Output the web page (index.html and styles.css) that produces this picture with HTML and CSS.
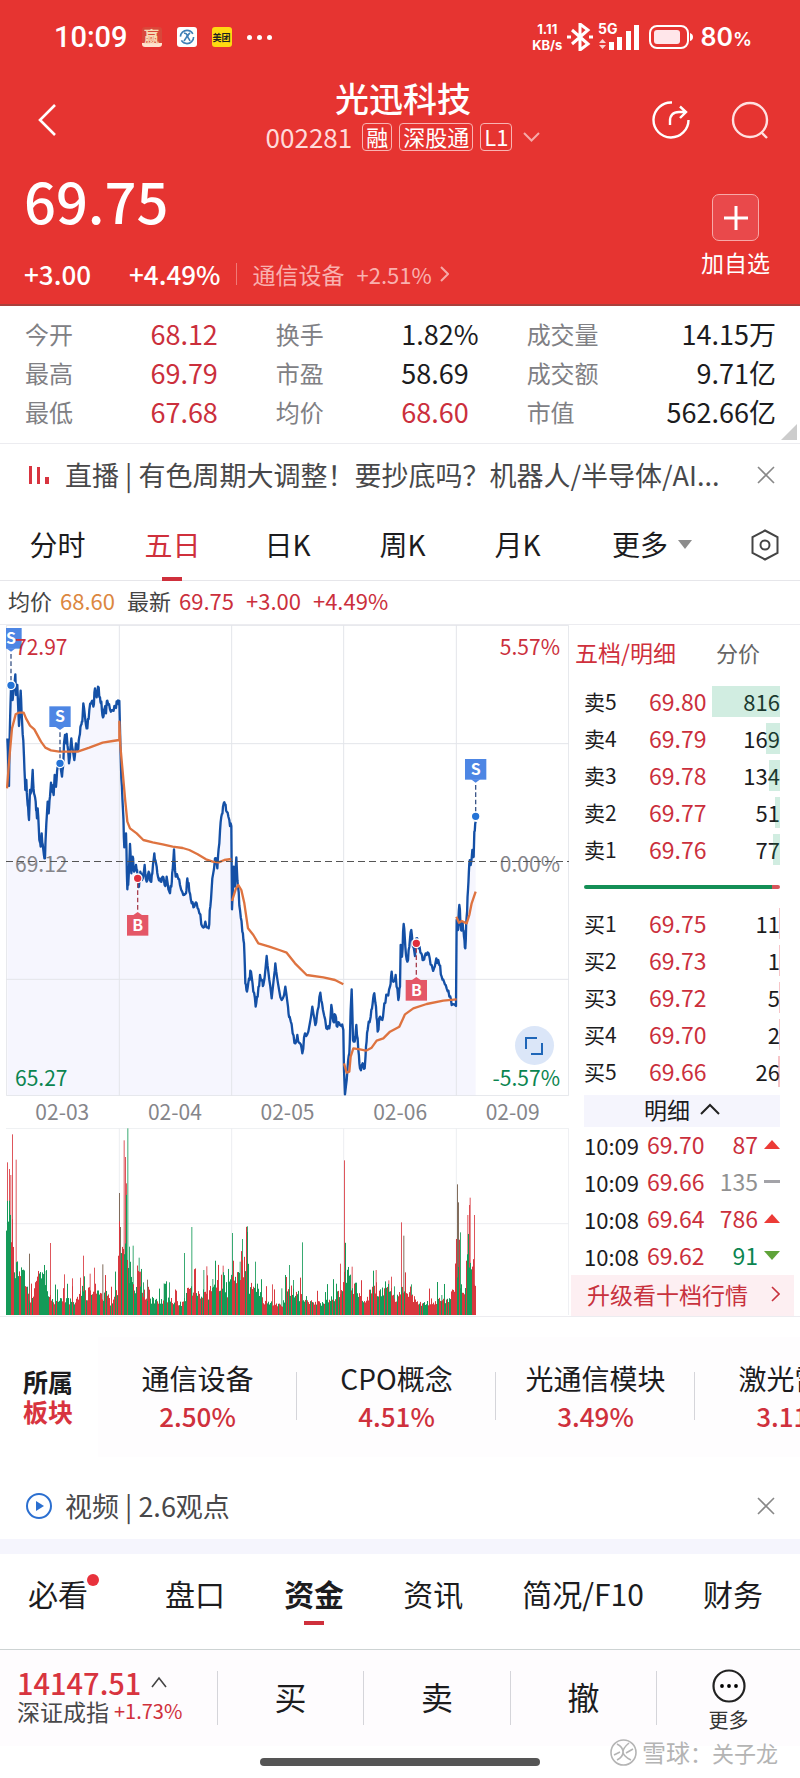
FILE: index.html
```html
<!DOCTYPE html>
<html lang="zh-CN">
<head>
    <meta charset="UTF-8">
    <meta name="viewport" content="width=device-width, initial-scale=1.0">
    <title>光迅科技 002281</title>
    <link rel="stylesheet" href="styles.css">
</head>
<body>
    <header class="header">
        <div class="status">
            <span class="clock">10:09</span>
            <span class="app app-red">赢</span>
            <span class="app app-white">
                <svg width="16" height="16" viewBox="0 0 16 16" fill="none" stroke="#3f7fb5" stroke-width="1.6"><circle cx="8" cy="8" r="6.6" stroke-dasharray="17 4"/><path d="M5 4q5 1 2 5l-2 3M11 4q-4 3-1 6l1 2"/></svg>
            </span>
            <span class="app app-yellow">美团</span>
            <span class="dots"><i></i><i></i><i></i></span>
            <span class="speed">1.11<br>KB/s</span>
            <svg class="bt" width="26" height="28" viewBox="0 0 26 28" fill="none" stroke="#fff" stroke-width="3"><path d="M5 7l16 14-8 6V1l8 6L5 21"/><path d="M0 14h4M22 14h4"/></svg>
            <svg class="signal" width="41" height="28" viewBox="0 0 41 28" fill="#fff"><text x="0" y="11" font-size="14" font-weight="700">5G</text><path d="M1 20l3.500-4 3.500 4zM1 22h7l-3.500 4z" opacity=".8"/><path d="M11 19h5v8h-5zM19 14h5v13h-5zM28 8h5v19h-5zM36 2h5v25h-5z"/></svg>
            <svg class="battery" width="44" height="24" viewBox="0 0 44 24"><rect x="1" y="1" width="38" height="22" rx="7" fill="none" stroke="#fff" stroke-width="2"/><rect x="5" y="5" width="26" height="14" rx="3" fill="#ffe6ea"/><path d="M41 8q3 1 3 4t-3 4z" fill="#fff"/></svg>
            <span class="percent">80<small>%</small></span>
        </div>
        <div class="title-row">
            <button class="icon-btn back" aria-label="返回"><svg width="20" height="32" viewBox="0 0 20 32" fill="none" stroke="#fff" stroke-width="2.600"><path d="M18 1L3 16l15 15"/></svg></button>
            <div class="title">
                <h1>光迅科技</h1>
                <div class="code"><span class="num">002281</span><span class="tag">融</span><span class="tag">深股通</span><span class="tag">L1</span>
                    <svg width="17" height="10" viewBox="0 0 17 10" fill="none" stroke="#f6a9a8" stroke-width="2"><path d="M1 1l7.500 7.500L16 1"/></svg></div>
            </div>
            <div class="tools">
                <button class="icon-btn" aria-label="分享"><svg width="38" height="38" viewBox="0 0 38 38" fill="none" stroke="#fff" stroke-width="2.400"><path d="M20 1.500A17.500 17.500 0 1 0 36.500 19"/><path d="M18 24v-4q0-9 9-9h6M28 5.500l6 5.500-6 6"/></svg></button>
                <button class="icon-btn" aria-label="搜索"><svg width="38" height="38" viewBox="0 0 38 38" fill="none" stroke="#ffe0e0" stroke-width="2.400"><circle cx="19" cy="19" r="17"/><path d="M30 31l6 6"/></svg></button>
            </div>
        </div>
        <div class="quote">
            <div>
                <div class="price">69.75</div>
                <div class="change"><span>+3.00</span><span>+4.49%</span><a href="#" class="sector-link">通信设备<span>+2.51%</span><svg width="9" height="16" viewBox="0 0 9 16" fill="none" stroke="#f6a9a8" stroke-width="2"><path d="M1 1l7 7-7 7"/></svg></a></div>
            </div>
            <button class="add"><span class="plus"><svg width="24" height="24" viewBox="0 0 24 24" stroke="#fff" stroke-width="3"><path d="M12 0v24M0 12h24"/></svg></span>加自选</button>
        </div>
    </header>

    <section class="stats">
        <table>
            <colgroup><col class="c1"><col class="c1"><col class="c1"><col class="c1"><col class="c1"><col></colgroup>
            <tr><th>今开</th><td class="red">68.12</td><th>换手</th><td>1.82%</td><th>成交量</th><td>14.15万</td></tr>
            <tr><th>最高</th><td class="red">69.79</td><th>市盈</th><td>58.69</td><th>成交额</th><td>9.71亿</td></tr>
            <tr><th>最低</th><td class="red">67.68</td><th>均价</th><td class="red">68.60</td><th>市值</th><td>562.66亿</td></tr>
        </table>
        <span class="corner"></span>
    </section>

    <section class="notice">
        <svg width="20" height="18" viewBox="0 0 20 18" fill="#d8343f"><path d="M0 0h3v18H0zM8 1h3v17H8zM16 11h4v7h-4z"/></svg>
        <p>直播 | 有色周期大调整！要抄底吗？机器人/半导体/AI...</p>
        <button class="icon-btn" aria-label="关闭"><svg width="18" height="18" viewBox="0 0 18 18" stroke="#888" stroke-width="1.600"><path d="M1 1l16 16M17 1L1 17"/></svg></button>
    </section>

    <nav class="periods">
        <button>分时</button>
        <button class="active">五日</button>
        <button>日K</button>
        <button>周K</button>
        <button>月K</button>
        <button>更多<span class="down"></span></button>
        <button class="setting" aria-label="设置"><svg width="28" height="32" viewBox="0 0 28 32" fill="none" stroke="#444" stroke-width="2"><path d="M14 1.500L26.500 8v16L14 30.500 1.500 24V8z"/><circle cx="14" cy="16" r="4.500"/></svg></button>
    </nav>

    <div class="legend"><span>均价<b class="orange">68.60</b></span><span>最新<b>69.75</b></span><b>+3.00</b><b>+4.49%</b></div>

    <main class="market">
        <div class="charts">
            <div class="price-chart">
                <svg viewBox="0 0 563 471">
                    <g transform="scale(.33333)">
                        <path id="area" fill="#f6f6fe"/>
                        <path d="M1 1h1687v1411H1zM0 356h1689M0 1063h1689M340 0v1413M677 0v1413M1013 0v1413M1351 0v1413" fill="none" stroke="#e3e5ea" stroke-width="3"/>
                        <path id="line" fill="none" stroke="#1450a6" stroke-width="7" stroke-linejoin="round"/>
                        <g id="avg" fill="none" stroke="#de7340" stroke-width="7" stroke-linejoin="round"></g>
                        <g id="marks" font-size="48" font-weight="700" text-anchor="middle"></g>
                    </g>
                </svg>
                <span class="label top red">72.97</span>
                <span class="label top right red">5.57%</span>
                <span class="label mid">69.12</span>
                <span class="label mid right">0.00%</span>
                <span class="label bottom green">65.27</span>
                <span class="label bottom right green">-5.57%</span>
                <span class="zero"></span>
                <button class="full" aria-label="全屏"><svg width="18" height="18" viewBox="0 0 18 18" fill="none" stroke="#1f66b8" stroke-width="2"><path d="M1 12V1h11M17 6v11H6"/></svg></button>
            </div>
            <div class="dates"><span>02-03</span><span>02-04</span><span>02-05</span><span>02-06</span><span>02-09</span></div>
            <svg class="volume" viewBox="0 0 563 187">
                <g transform="scale(.33333)">
                    <path d="M0 1h1688v560M0 287h1689M340 0v561M677 0v561M1013 0v561M1351 0v561" fill="none" stroke="#eceef1" stroke-width="3"/>
                    <g id="bars"></g>
                </g>
            </svg>
        </div>

        <aside class="book">
            <div class="book-tabs"><button class="active">五档/明细</button><button>分价</button></div>
            <table class="levels">
                <tr><th>卖5</th><td class="red">69.80</td><td><i style="width:68px"></i>816</td></tr>
                <tr><th>卖4</th><td class="red">69.79</td><td><i style="width:14px"></i>169</td></tr>
                <tr><th>卖3</th><td class="red">69.78</td><td><i style="width:11px"></i>134</td></tr>
                <tr><th>卖2</th><td class="red">69.77</td><td><i style="width:5px"></i>51</td></tr>
                <tr><th>卖1</th><td class="red">69.76</td><td><i style="width:7px"></i>77</td></tr>
            </table>
            <div class="ratio"></div>
            <table class="levels buy">
                <tr><th>买1</th><td class="red">69.75</td><td><i style="width:1px"></i>11</td></tr>
                <tr><th>买2</th><td class="red">69.73</td><td><i style="width:1px"></i>1</td></tr>
                <tr><th>买3</th><td class="red">69.72</td><td><i style="width:1px"></i>5</td></tr>
                <tr><th>买4</th><td class="red">69.70</td><td><i style="width:1px"></i>2</td></tr>
                <tr><th>买5</th><td class="red">69.66</td><td><i style="width:2px"></i>26</td></tr>
            </table>
            <button class="detail">明细<svg width="20" height="12" viewBox="0 0 20 12" fill="none" stroke="#222" stroke-width="2"><path d="M1 11l9-9 9 9"/></svg></button>
            <table class="trades">
                <tr><th>10:09</th><td class="red">69.70</td><td class="red">87</td><td><span class="up"></span></td></tr>
                <tr><th>10:09</th><td class="red">69.66</td><td class="grey">135</td><td><span class="flat"></span></td></tr>
                <tr><th>10:08</th><td class="red">69.64</td><td class="red">786</td><td><span class="up"></span></td></tr>
                <tr><th>10:08</th><td class="red">69.62</td><td class="green">91</td><td><span class="fall"></span></td></tr>
            </table>
            <a class="upgrade" href="#">升级看十档行情<svg width="9" height="16" viewBox="0 0 9 16" fill="none" stroke="#c8323e" stroke-width="1.600"><path d="M1 1l7 7-7 7"/></svg></a>
        </aside>
    </main>

    <section class="sectors">
        <h2>所属<br><span>板块</span></h2>
        <div class="sector-list">
            <a href="#">通信设备<b>2.50%</b></a>
            <a href="#">CPO概念<b>4.51%</b></a>
            <a href="#">光通信模块<b>3.49%</b></a>
            <a href="#">激光雷达<b>3.11%</b></a>
        </div>
    </section>

    <section class="notice video">
        <svg width="26" height="26" viewBox="0 0 26 26"><circle cx="13" cy="13" r="12" fill="none" stroke="#2b6fd0" stroke-width="2"/><path d="M10 8l8 5-8 5z" fill="#2b6fd0"/></svg>
        <p>视频 | 2.6观点</p>
        <button class="icon-btn" aria-label="关闭"><svg width="18" height="18" viewBox="0 0 18 18" stroke="#888" stroke-width="1.600"><path d="M1 1l16 16M17 1L1 17"/></svg></button>
    </section>

    <nav class="info-tabs">
        <button class="new">必看<span class="dot"></span></button>
        <button>盘口</button>
        <button class="active">资金</button>
        <button>资讯</button>
        <button>简况/F10</button>
        <button>财务</button>
    </nav>

    <footer class="footer">
        <a class="index" href="#">
            <span class="point">14147.51<svg width="16" height="12" viewBox="0 0 16 12" fill="none" stroke="#444" stroke-width="1.600"><path d="M1 11l7-9 7 9"/></svg></span>
            <span class="name">深证成指<b>+1.73%</b></span>
        </a>
        <button>买</button>
        <button>卖</button>
        <button>撤</button>
        <button class="more"><svg width="34" height="34" viewBox="0 0 34 34"><circle cx="17" cy="17" r="15.500" fill="none" stroke="#222" stroke-width="2.200"/><circle cx="10" cy="17" r="1.900"/><circle cx="17" cy="17" r="1.900"/><circle cx="24" cy="17" r="1.900"/></svg>更多</button>
    </footer>
    <div class="home"><span class="home-bar"></span>
        <div class="watermark"><svg width="27" height="27" viewBox="0 0 27 27" fill="none" stroke="#b4b4b4" stroke-width="1.600"><circle cx="13.500" cy="13.500" r="12.500"/><path d="M7 5q6 3 6 8t-6 8M19 4q-6 5-6 9t8 8M4 16l6-3M16 14l7-4"/></svg><b>雪球</b>：关子龙</div>
    </div>
    <script src="script.js"></script>
</body>
</html>
```

FILE: styles.css
```css
* {
    box-sizing: border-box;
}
body {
    margin: 0;
    font-family: "Noto Sans CJK SC", "Noto Sans", sans-serif;
    background-color: #fff;
    color: #1c1c1e;
    overflow-x: hidden;
}
button {
    border: none;
    background: none;
    padding: 0;
    font: inherit;
    color: inherit;
    cursor: pointer;
}
a {
    color: inherit;
    text-decoration: none;
}
b, th {
    font-weight: 400;
}
svg {
    display: block;
    flex: none;
}
table {
    border-collapse: collapse;
    table-layout: fixed;
    width: 100%;
}
th, td {
    padding: 0;
    text-align: left;
}
.red {
    color: #cb2f3c;
}
.green {
    color: #0b8550;
}
.grey {
    color: #919191;
}
.icon-btn {
    display: flex;
}

/* header */
.header {
    background-color: #e63431;
    color: #fff;
    height: 306px;
    border-bottom: 2px solid #a9403c;
}
.status {
    display: flex;
    align-items: center;
    height: 74px;
    padding: 0 48px 0 54px;
    font-family: Inter, Roboto, sans-serif;
}
.clock {
    font-family: Roboto, sans-serif;
    font-size: 29px;
    font-weight: 500;
    margin-right: 14px;
}
.app {
    width: 20px;
    height: 20px;
    border-radius: 3px;
    margin-right: 15px;
    display: flex;
    align-items: center;
    justify-content: center;
    font-family: "Noto Sans CJK SC", sans-serif;
    font-weight: 700;
}
.app-red {
    background-color: #d9473a;
    color: #f7d9b5;
    font-size: 15px;
    border-bottom: 4px solid #ffe3cf;
}
.app-white {
    background-color: #fff;
}
.app-yellow {
    background-color: #ffd911;
    color: #222;
    font-size: 9px;
}
.dots {
    display: flex;
    gap: 5px;
}
.dots i {
    width: 5px;
    height: 5px;
    border-radius: 50%;
    background-color: #fff;
}
.speed {
    margin-left: auto;
    font-size: 13px;
    line-height: 16px;
    font-weight: 700;
    text-align: center;
}
.bt {
    margin: 0 5px;
}
.battery {
    margin: 0 7px 0 10px;
}
.percent {
    font-size: 25px;
    font-weight: 600;
}
.percent small {
    font-size: 19px;
}
.title-row {
    display: grid;
    grid-template-columns: 1fr auto 1fr;
    align-items: center;
    height: 92px;
    padding: 0 31px 0 37px;
}
.title {
    text-align: center;
    padding-bottom: 7px;
}
.title h1 {
    margin: 0;
    font-size: 34px;
    line-height: 40px;
    font-weight: 500;
}
.code {
    display: flex;
    align-items: center;
    gap: 7px;
    height: 38px;
    color: #ffdada;
}
.num {
    font-size: 26px;
    margin-right: 3px;
}
.tag {
    font-size: 22px;
    line-height: 24px;
    padding: 0 3px 2px;
    border: 1px solid #f9b4b2;
    border-radius: 4px;
    color: #fff;
}
.code svg {
    margin-left: 4px;
}
.tools {
    display: flex;
    justify-content: flex-end;
    gap: 41px;
}
.quote {
    display: flex;
    justify-content: space-between;
    padding: 0 30px 0 24px;
}
.price {
    font-size: 56px;
    font-weight: 500;
    line-height: 68px;
}
.change {
    display: flex;
    align-items: center;
    gap: 38px;
    font-size: 26px;
    font-weight: 500;
    line-height: 30px;
    margin-top: 25px;
}
.sector-link {
    display: flex;
    align-items: center;
    font-size: 23px;
    font-weight: 400;
    line-height: 22px;
    color: #f9b0ae;
    border-left: 1px solid #f07a77;
    padding-left: 15px;
    margin-left: -22px;
}
.sector-link span {
    font-size: 22px;
    margin: 0 8px 0 12px;
}
.add {
    font-size: 23px;
    line-height: 30px;
    padding-top: 28px;
    display: flex;
    flex-direction: column;
    align-items: center;
    gap: 6px;
}
.plus {
    width: 47px;
    height: 47px;
    border: 1px solid #f7a9a8;
    border-radius: 7px;
    background-color: #e9494b;
    display: flex;
    align-items: center;
    justify-content: center;
}

/* stats */
.stats {
    position: relative;
    padding: 8px 24px 12px 25px;
    border-bottom: 1px solid #ececf0;
    font-size: 27px;
}
.stats .c1 {
    width: 16.7%;
}
.stats tr {
    height: 39px;
    line-height: 36px;
}
.stats th {
    font-size: 24px;
    color: #808084;
}
.stats td:last-child {
    text-align: right;
}
.corner {
    position: absolute;
    right: 3px;
    bottom: 3px;
    border: 8px solid transparent;
    border-right-color: #ccc;
    border-bottom-color: #ccc;
}

/* notice lines */
.notice {
    display: flex;
    align-items: center;
    height: 64px;
    padding: 0 25px 2px 29px;
    color: #48484a;
}
.notice p {
    margin: 0 auto 0 16px;
    font-size: 27px;
    line-height: 36px;
    white-space: nowrap;
}

/* period tabs */
.periods {
    display: grid;
    grid-template-columns: repeat(5, 115fr) 154fr 71fr;
    justify-items: center;
    height: 73px;
    border-bottom: 1px solid #e6e6ea;
    font-size: 28px;
    line-height: 73px;
}
.periods button {
    position: relative;
    display: flex;
    align-items: center;
}
.periods .active,
.book-tabs .active {
    color: #cf303c;
}
.periods .active::after,
.info-tabs .active::after {
    content: "";
    position: absolute;
    left: 50%;
    bottom: 0;
    width: 20px;
    height: 4px;
    margin-left: -10px;
    background-color: #cf303c;
}
.down {
    border: 7px solid transparent;
    border-top: 9px solid #8c8c8c;
    border-bottom: 0;
    margin-left: 10px;
}
.legend {
    display: flex;
    gap: 12px;
    padding-left: 8px;
    font-size: 22px;
    line-height: 39px;
    height: 43px;
    color: #444;
}
.legend b {
    color: #cb2f3c;
}
.legend span b {
    margin-left: 8px;
}
.legend .orange {
    color: #dc8740;
}

/* charts */
.market {
    display: grid;
    grid-template-columns: 563fr 225fr;
    padding: 0 6px;
    border-top: 1px solid #ececf0;
    border-bottom: 1px solid #ececf0;
}
.charts svg {
    width: 100%;
    height: auto;
}
.price-chart {
    position: relative;
}
.label {
    position: absolute;
    left: 9px;
    font-size: 21px;
    line-height: 26px;
    color: #85858a;
}
.label.red {
    color: #cb2f3c;
}
.label.green {
    color: #0b8550;
}
.label.right {
    left: auto;
    right: 9px;
}
.top {
    top: 8px;
}
.mid {
    top: 225px;
}
.bottom {
    bottom: 6px;
}
.zero {
    position: absolute;
    left: 0;
    right: 0;
    top: 50%;
    height: 1px;
    background: repeating-linear-gradient(90deg, #555 0 7px, transparent 7px 11px);
}
.full {
    position: absolute;
    right: 15px;
    bottom: 31px;
    width: 39px;
    height: 39px;
    padding: 10px;
    border-radius: 50%;
    background-color: #dbe6f8;
}
.charts .full svg {
    width: 18px;
}
.dates {
    display: grid;
    grid-template-columns: repeat(5, 1fr);
    text-align: center;
    font-size: 21px;
    line-height: 30px;
    height: 32px;
    color: #85858a;
}

/* order book */
.book {
    font-size: 23px;
    padding-left: 2px;
}
.book-tabs {
    display: flex;
    gap: 40px;
    height: 58px;
    padding: 0 0 5px 4px;
    color: #666;
}
.book-tabs button:last-child {
    font-size: 22px;
}
.levels,
.trades {
    width: 196px;
    margin-left: 13px;
}
.levels tr,
.trades tr {
    height: 37px;
    line-height: 31px;
}
.levels th {
    width: 65px;
    font-size: 21px;
}
.levels td:last-child {
    position: relative;
    text-align: right;
    font-size: 22px;
}
.levels i {
    position: absolute;
    right: 0;
    top: 3px;
    height: 31px;
    background-color: #1aa56a33;
}
.buy i {
    background-color: #e8505b55;
}
.ratio {
    width: 196px;
    height: 4px;
    margin: 17px 0 16px 13px;
    border-radius: 2px;
    background: linear-gradient(90deg, #148f56 96%, #d5555a 96%);
}
.detail {
    display: flex;
    align-items: center;
    justify-content: center;
    gap: 10px;
    width: 196px;
    height: 32px;
    line-height: 26px;
    padding-bottom: 4px;
    margin: 5px 0 0 13px;
    background-color: #f5f5fd;
}
.trades tr {
    line-height: 29px;
}
.trades th {
    width: 63px;
    font-size: 22px;
}
.trades td {
    padding-bottom: 2px;
}
.trades td:nth-child(3) {
    width: 48px;
    text-align: right;
}
.trades td:last-child {
    width: 22px;
}
.up, .fall, .flat {
    display: block;
    margin-left: auto;
    width: 16px;
    border: 8px solid transparent;
    border-top: 0;
    border-bottom: 9px solid #ec3b36;
}
.fall {
    border-bottom: 0;
    border-top: 9px solid #5fa339;
}
.flat {
    border: 0;
    height: 3px;
    background-color: #a3a3a8;
}
.upgrade {
    display: flex;
    align-items: center;
    justify-content: space-between;
    height: 41px;
    padding: 0 14px 3px 16px;
    color: #c8323e;
    background-color: #fdeff2;
}

/* sectors */
.sectors {
    display: flex;
    margin-top: 20px;
    height: 120px;
    overflow: hidden;
}
.sectors h2 {
    flex: none;
    width: 98px;
    margin: 0;
    padding: 29px 0 0 23px;
    font-size: 25px;
    line-height: 30px;
}
.sectors h2 span {
    color: #d8343f;
}
.sector-list {
    display: flex;
    background-color: #fefdfe;
}
.sector-list a {
    position: relative;
    flex: none;
    width: 199px;
    padding-top: 22px;
    font-size: 28px;
    line-height: 38px;
    text-align: center;
}
.sector-list a::after {
    content: "";
    position: absolute;
    right: 0;
    top: 35px;
    height: 48px;
    border-right: 1px solid #d5d5da;
}
.sector-list b {
    display: block;
    font-size: 26px;
    font-weight: 500;
    color: #cf303c;
}
.video {
    height: 82px;
    padding: 16px 25px 0 26px;
}
.video p {
    margin-left: 13px;
}

/* info tabs */
.info-tabs {
    display: flex;
    justify-content: space-between;
    border-top: 15px solid #f5f5fd;
    border-bottom: 1px solid #cdd3d3;
    height: 111px;
    padding: 19px 37px 0 28px;
    font-size: 30px;
    line-height: 40px;
}
.info-tabs button {
    position: relative;
    height: 52px;
    padding-bottom: 12px;
}
.info-tabs .new {
    padding-right: 18px;
}
.info-tabs .active {
    font-weight: 700;
}
.dot {
    position: absolute;
    right: 7px;
    top: 1px;
    width: 12px;
    height: 12px;
    border-radius: 50%;
    background-color: #e8323c;
}

/* footer */
.footer {
    display: grid;
    grid-template-columns: 217fr 146fr 147fr 146fr 144fr;
    align-items: center;
    height: 96px;
    background-color: #fefcfe;
}
.footer button {
    height: 54px;
    border-left: 1px solid #d5d5da;
    font-size: 32px;
    line-height: 46px;
    padding-bottom: 5px;
}
.index {
    padding: 0 0 4px 17px;
}
.point {
    display: flex;
    align-items: center;
    gap: 10px;
    font-size: 29px;
    font-weight: 500;
    line-height: 30px;
    color: #d8343f;
}
.name {
    display: flex;
    gap: 5px;
    font-size: 23px;
    line-height: 28px;
    color: #48484a;
    white-space: nowrap;
}
.name b {
    font-size: 20px;
    color: #cf303c;
}
.footer .more {
    display: flex;
    flex-direction: column;
    align-items: center;
    justify-content: center;
    gap: 4px;
    font-size: 20px;
    line-height: 26px;
    padding: 5px 0 0;
    color: #333;
}
.home {
    position: relative;
    display: flex;
    justify-content: center;
    padding-top: 12px;
    height: 31px;
}
.home-bar {
    width: 35%;
    height: 8px;
    border-radius: 4px;
    background-color: #555;
}
.watermark {
    position: absolute;
    right: 22px;
    top: -9px;
    display: flex;
    align-items: center;
    font-size: 22px;
    line-height: 30px;
    color: #b4b4b4;
}
.watermark svg {
    margin-right: 5px;
}
.watermark b {
    font-size: 24px;
}
```

FILE: script.js
```js
const prices = "4,340 9,483 11,335 15,190 20,225 28,148 30,210 34,180 39,303 44,197 48,285 54,395 58,495 61,465 65,540 69,585 72,495 76,500 80,435 84,505 89,530 93,580 95,550 100,645 104,665 107,625 112,675 117,700 121,595 125,530 128,565 132,515 135,473 139,500 143,510 146,450 150,485 155,425 162,420 168,455 172,415 174,355 177,330 180,355 182,327 189,415 196,340 202,385 205,405 210,355 215,375 220,335 225,300 229,290 232,235 238,285 244,310 250,255 257,230 262,245 267,190 272,217 276,185 282,217 286,230 291,277 296,250 300,265 304,227 312,253 320,257 328,245 334,230 340,228 " +
    "343,355 346,460 351,555 355,667 360,625 364,793 368,755 372,657 376,745 380,695 384,740 390,720 395,760 399,785 403,740 408,765 416,720 422,770 428,740 434,770 439,745 445,685 450,715 456,755 464,770 470,755 476,780 482,755 490,800 496,785 500,735 504,673 509,755 515,755 522,780 532,810 540,805 544,760 550,800 557,835 565,845 572,835 580,865 589,905 598,890 608,910 613,845 619,760 627,700 634,730 640,655 646,575 651,545 657,538 662,560 670,585 676,603 " +
    "678,853 683,725 687,785 691,697 696,785 702,855 709,920 714,955 718,1075 723,1100 729,1060 735,1040 742,1100 749,1145 755,1115 762,1050 768,1065 772,1080 782,993 790,1065 797,1120 803,1065 808,1015 816,1075 827,1125 838,1085 846,1145 851,1175 860,1225 868,1255 874,1230 882,1255 889,1285 897,1225 907,1220 919,1145 928,1200 935,1155 943,1103 951,1155 961,1210 970,1210 976,1140 982,1190 988,1170 994,1205 1002,1200 1012,1215 " +
    "1014,1335 1017,1408 1025,1325 1030,1285 1034,1155 1037,1093 1041,1245 1046,1250 1051,1200 1057,1275 1062,1330 1070,1315 1076,1330 1080,1265 1085,1215 1094,1175 1100,1135 1105,1105 1110,1145 1115,1220 1122,1175 1129,1185 1135,1135 1144,1110 1152,1085 1157,1040 1162,1070 1169,1050 1177,1125 1182,1085 1184,960 1188,995 1193,897 1198,965 1204,1010 1210,965 1216,915 1221,965 1227,993 1231,940 1238,970 1246,985 1252,1005 1259,985 1268,985 1277,1020 1284,1030 1291,1000 1300,1020 1307,1055 1314,1070 1322,1090 1330,1115 1337,1140 1350,1143 " +
    "1352,885 1356,915 1360,840 1365,915 1370,895 1374,935 1378,970 1382,875 1386,795 1390,715 1394,720 1399,675 1403,695 1405,620 1409,590";

const averages = [
    "3,490 10,400 18,310 29,268 38,263 53,263 60,280 72,302 85,313 105,350 118,368 135,376 160,380 215,380 250,368 290,353 320,348 340,345 340,290 343,362 350,440 358,530 364,590 372,610 392,625 412,645 440,652 470,658 500,665 530,669 550,675 575,688 600,703 620,710 638,712 655,705 676,702",
    "678,828 690,790 697,780 706,795 715,835 726,910 742,930 757,955 790,965 820,975 842,983 867,1015 902,1050 952,1057 987,1065 1012,1078",
    "1014,1315 1022,1343 1030,1340 1034,1295 1042,1270 1062,1273 1080,1277 1097,1268 1112,1247 1132,1240 1152,1220 1180,1205 1197,1168 1222,1150 1262,1137 1312,1127 1352,1123",
    "1351,875 1359,893 1367,888 1382,895 1390,870 1397,835 1409,800"
];

// x, dot y, box top, side
const marks = [[15, 181, 9, "S"], [162, 415, 244, "S"], [395, 760, 870, "B"], [1231, 955, 1065, "B"], [1409, 574, 402, "S"]];

const base = "0,220 10,250 20,200 30,130 40,90 55,110 65,60 75,30 95,80 115,90 125,40 150,25 180,30 210,20 225,60 245,40 255,70 275,60 290,30 300,50 315,20 335,60 338,180 350,190 362,280 368,130 380,70 390,50 400,90 415,30 440,30 480,30 530,20 550,60 580,50 600,40 625,60 650,90 665,50 675,100 690,90 705,120 725,180 730,60 752,60 770,30 800,20 830,15 850,70 868,45 900,35 920,20 950,20 985,40 1005,50 1014,100 1022,100 1040,70 1060,50 1080,30 1100,60 1115,40 1150,70 1165,30 1180,40 1195,60 1210,40 1250,20 1300,30 1345,25 1351,160 1360,110 1370,60 1380,50 1384,170 1392,150 1400,90 1408,60";
const peaks = "4,458,r 10,438,r 14,420,r 19,542,r 30,466,r 70,184,d 97,104,g 116,132,g 133,216,r 175,122,r 199,110,r 223,112,r 232,178,r 252,124,r 265,142,r 290,152,d 340,366,d 343,264,d 354,524,r 358,474,r 361,395,r 365,560,g 370,205,g 381,208,g 399,172,g 403,130,r 412,98,g 424,106,d 474,95,g 490,98,g 535,186,g 557,264,g 593,135,g 602,146,r 620,108,g 651,148,r 679,246,g 702,160,g 709,228,g 715,160,g 724,266,g 748,160,g 799,92,r 827,80,g 850,150,g 862,105,g 889,218,g 1003,154,r 1015,464,r 1038,145,r 1110,135,r 1148,104,r 1156,115,r 1165,86,g 1186,278,r 1193,238,d 1216,92,g 1307,60,g 1354,392,d 1357,338,d 1363,248,g 1385,300,r 1390,330,r 1392,352,r 1405,300,r";

const colors = { r: "#d8383f", g: "#159a58", d: "#6c5440" };
const parse = text => text.split(" ").map(p => p.split(",").map(v => isNaN(v) ? v : Number(v)));

let seed = 7;
function random() {
    seed = (seed * 16807) % 2147483647;
    return seed / 2147483647;
}

// price line with the small ticks between the main points
const points = parse(prices);
let path = "M" + points[0].join(" ");
for (let i = 1; i < points.length; i++) {
    const [x0, y0] = points[i - 1];
    const [x, y] = points[i];
    if (x - x0 > 3) {
        for (const t of [0.35, 0.65]) {
            path += `L${x0 + (x - x0) * t} ${y0 + (y - y0) * t + (random() - 0.5) * 24}`;
        }
    }
    path += `L${x} ${y}`;
}
document.getElementById("line").setAttribute("d", path);
document.getElementById("area").setAttribute("d", path + "V1413H4Z");
document.getElementById("avg").innerHTML = averages.map(a => `<polyline points="${a}"/>`).join("");

document.getElementById("marks").innerHTML = marks.map(([x, dot, top, side]) => {
    const sell = side === "S";
    const box = sell ? "#4d86e4" : "#e45767";
    const tip = sell ? `M${x - 14} ${top + 61}h28l-14 10z` : `M${x - 14} ${top + 1}h28l-14-10z`;
    const from = sell ? top + 78 : top - 16;
    return `<path d="M${x} ${from}V${dot}" stroke="${sell ? "#3c5688" : "#a8404f"}" stroke-width="4" stroke-dasharray="14 8"/>
        <circle cx="${x}" cy="${dot}" r="13" fill="${sell ? "#2473d6" : "#e02f3d"}" stroke="#fff" stroke-width="4"/>
        <rect x="${x - 32}" y="${top}" width="64" height="62" fill="${box}"/><path d="${tip}" fill="${box}"/>
        <text x="${x}" y="${top + 48}" fill="#fff">${side}</text>`;
}).join("");

// volume bars
const anchors = parse(base);
let bars = "";
let color = "r";
let k = 0;
for (const [x, h, c] of parse(peaks)) {
    bars += `<rect x="${x - 1}" y="${561 - h}" width="3" height="${h}" fill="${colors[c]}" opacity=".85"/>`;
}
for (let x = 2; x < 1411; x += 3) {
    while (k < anchors.length - 2 && anchors[k + 1][0] < x) k++;
    const [x0, h0] = anchors[k];
    const [x1, h1] = anchors[k + 1];
    let h = (h0 + (h1 - h0) * (x - x0) / (x1 - x0)) * (0.7 + random() * 0.8) + 12;
    if (random() < 0.12) h = h * 1.3 + 30;
    if (random() < 0.45) color = color === "r" ? "g" : "r";
    bars += `<rect x="${x - 2}" y="${561 - h}" width="3" height="${h}" fill="${colors[color]}"/>`;
}
document.getElementById("bars").innerHTML = bars;
```
